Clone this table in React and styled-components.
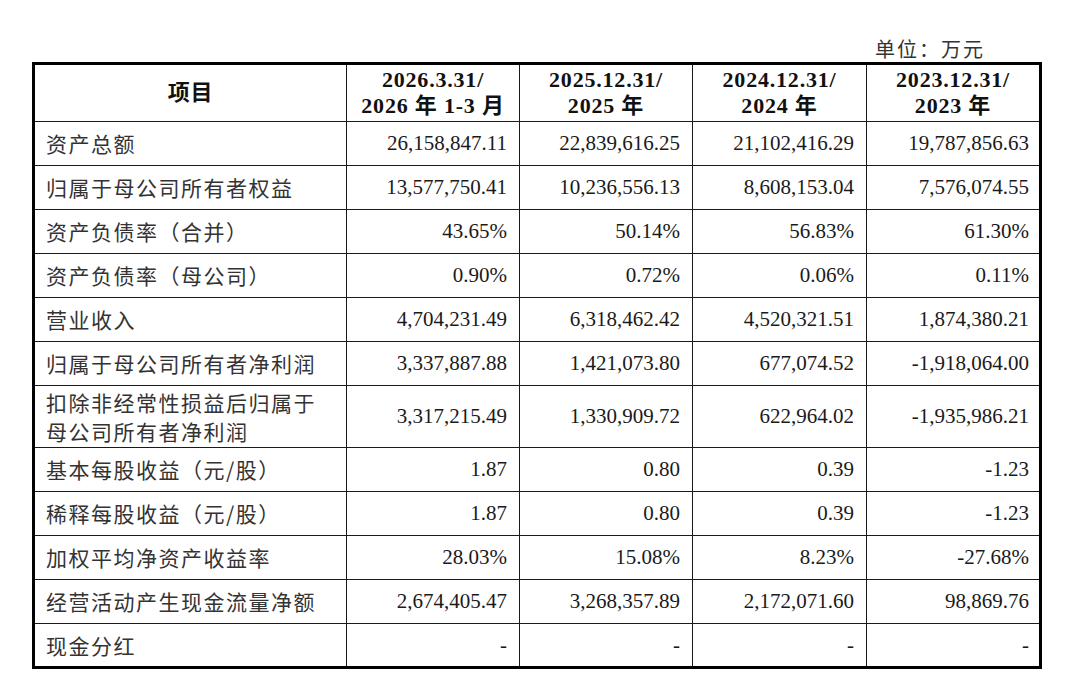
import React from "react";
import styled, { createGlobalStyle } from "styled-components";

const GlobalStyle = createGlobalStyle`
  html, body {
    margin: 0;
    padding: 0;
    background: #ffffff;
  }
  body {
    font-family: "Liberation Serif", "Noto Sans CJK SC", serif;
    color: #111;
  }
`;

const columns = [
  { head: ["2026.3.31/", "2026 年 1-3 月"] },
  { head: ["2025.12.31/", "2025 年"] },
  { head: ["2024.12.31/", "2024 年"] },
  { head: ["2023.12.31/", "2023 年"] },
];

const rows = [
  { label: ["资产总额"], values: ["26,158,847.11", "22,839,616.25", "21,102,416.29", "19,787,856.63"] },
  { label: ["归属于母公司所有者权益"], values: ["13,577,750.41", "10,236,556.13", "8,608,153.04", "7,576,074.55"] },
  { label: ["资产负债率（合并）"], values: ["43.65%", "50.14%", "56.83%", "61.30%"] },
  { label: ["资产负债率（母公司）"], values: ["0.90%", "0.72%", "0.06%", "0.11%"] },
  { label: ["营业收入"], values: ["4,704,231.49", "6,318,462.42", "4,520,321.51", "1,874,380.21"] },
  { label: ["归属于母公司所有者净利润"], values: ["3,337,887.88", "1,421,073.80", "677,074.52", "-1,918,064.00"] },
  { label: ["扣除非经常性损益后归属于", "母公司所有者净利润"], values: ["3,317,215.49", "1,330,909.72", "622,964.02", "-1,935,986.21"], tall: true },
  { label: ["基本每股收益（元/股）"], values: ["1.87", "0.80", "0.39", "-1.23"] },
  { label: ["稀释每股收益（元/股）"], values: ["1.87", "0.80", "0.39", "-1.23"] },
  { label: ["加权平均净资产收益率"], values: ["28.03%", "15.08%", "8.23%", "-27.68%"] },
  { label: ["经营活动产生现金流量净额"], values: ["2,674,405.47", "3,268,357.89", "2,172,071.60", "98,869.76"] },
  { label: ["现金分红"], values: ["-", "-", "-", "-"] },
];

const Page = styled.div`
  width: 1080px;
  height: 680px;
  box-sizing: border-box;
  padding: 34px 0 0 32px;
  overflow: hidden;
`;

const UnitRow = styled.div`
  width: 953px;
  height: 28px;
  display: flex;
  justify-content: flex-end;
  align-items: center;
  font-family: "Noto Sans CJK SC", sans-serif;
  font-size: 20px;
  letter-spacing: 2px;
  color: #333;
`;

const Table = styled.table`
  border-collapse: collapse;
  table-layout: fixed;
  width: 1007px;
  border: 3px solid #000;
`;

const HeadRow = styled.tr`
  height: 58px;
`;

const BodyRow = styled.tr`
  height: ${(p) => (p.$tall ? 62 : 44)}px;
`;

const HeadCell = styled.th`
  border: 1px solid #1a1a1a;
  padding: 0 2px;
  text-align: center;
  vertical-align: middle;
  font-family: "Liberation Serif", "Noto Sans CJK SC", serif;
  font-weight: 700;
  font-size: 22px;
  letter-spacing: 0.8px;
  line-height: 26px;
  color: #111;
  white-space: nowrap;
`;

const LabelCell = styled.td`
  border: 1px solid #1a1a1a;
  padding: 0 8px 0 11px;
  text-align: left;
  vertical-align: middle;
  font-family: "Noto Sans CJK SC", sans-serif;
  font-size: 21px;
  letter-spacing: 1.5px;
  line-height: 29px;
  color: #333;
  white-space: nowrap;
`;

const ValueCell = styled.td`
  border: 1px solid #1a1a1a;
  padding: 0 ${(p) => (p.$last ? 10 : 12)}px 0 4px;
  text-align: right;
  vertical-align: middle;
  font-family: "Liberation Serif", serif;
  font-size: 21px;
  color: #1a1a1a;
  white-space: nowrap;
`;

const Line = styled.div``;

export default function App() {
  return (
    <>
      <GlobalStyle />
      <Page>
        <UnitRow>单位：万元</UnitRow>
        <Table>
          <colgroup>
            <col style={{ width: 313 }} />
            <col style={{ width: 173 }} />
            <col style={{ width: 173 }} />
            <col style={{ width: 174 }} />
            <col style={{ width: 174 }} />
          </colgroup>
          <thead>
            <HeadRow>
              <HeadCell>项目</HeadCell>
              {columns.map((c) => (
                <HeadCell key={c.head[0]}>
                  {c.head.map((l) => (
                    <Line key={l}>{l}</Line>
                  ))}
                </HeadCell>
              ))}
            </HeadRow>
          </thead>
          <tbody>
            {rows.map((r) => (
              <BodyRow key={r.label.join("")} $tall={r.tall}>
                <LabelCell>
                  {r.label.map((l) => (
                    <Line key={l}>{l}</Line>
                  ))}
                </LabelCell>
                {r.values.map((v, i) => (
                  <ValueCell key={i} $last={i === r.values.length - 1}>
                    {v}
                  </ValueCell>
                ))}
              </BodyRow>
            ))}
          </tbody>
        </Table>
      </Page>
    </>
  );
}
